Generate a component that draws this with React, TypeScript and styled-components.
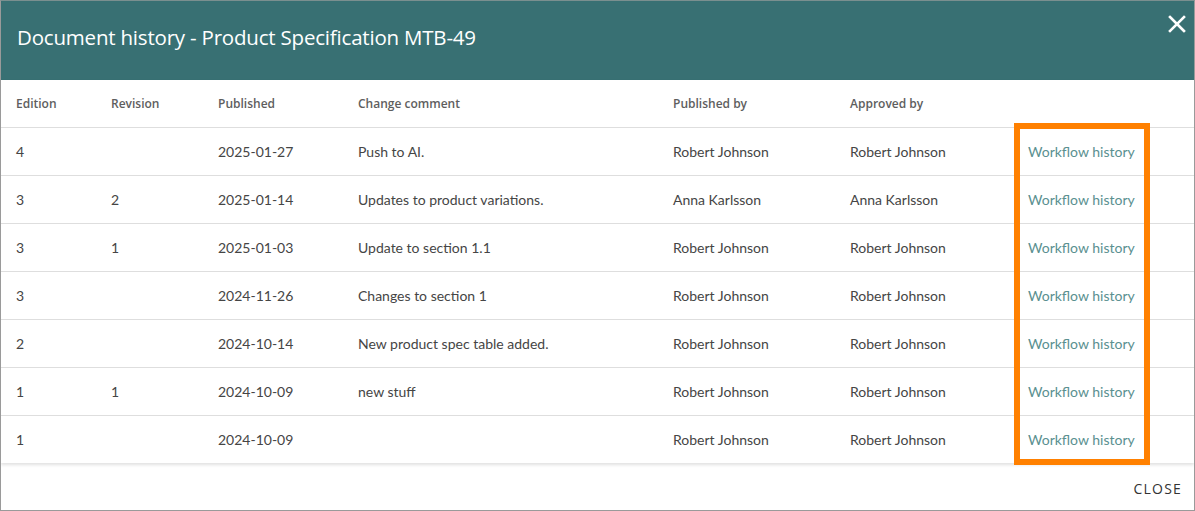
import React from "react";
import styled, { createGlobalStyle } from "styled-components";

const GlobalStyle = createGlobalStyle`
    html, body {
        margin: 0;
        padding: 0;
        background: #ffffff;
    }
`;

const Dialog = styled.div`
    position: relative;
    box-sizing: border-box;
    width: 1195px;
    height: 511px;
    border: 1px solid #9a9a9a;
    border-top-color: #7a8f8f;
    display: flex;
    flex-direction: column;
    overflow: hidden;
    font-family: "Open Sans", "Liberation Sans", sans-serif;
    background: #ffffff;
`;

const Header = styled.div`
    height: 79px;
    flex-shrink: 0;
    background-color: #387073;
    display: flex;
    align-items: center;
    justify-content: space-between;
    padding: 0 16px;
`;

const Title = styled.h1`
    margin: 0 0 8px;
    font-family: "Open Sans", sans-serif;
    font-size: 20.5px;
    font-weight: 400;
    letter-spacing: -0.2px;
    color: #ffffff;
`;

const CloseIcon = styled.button`
    align-self: flex-start;
    margin: 13px -9px 0 0;
    padding: 0;
    border: none;
    background: none;
    cursor: pointer;
    width: 20px;
    height: 20px;
`;

const Body = styled.div`
    flex: 1;
    overflow: hidden;
    box-shadow: 0 2px 3px rgba(0, 0, 0, 0.12);
    position: relative;
    z-index: 1;
`;

const Table = styled.table`
    width: 100%;
    border-collapse: collapse;
    table-layout: fixed;
`;

const Th = styled.th<{ $w?: number }>`
    box-sizing: border-box;
    width: ${(p) => (p.$w ? `${p.$w}px` : "auto")};
    height: 47px;
    padding: 0 0 0 15px;
    text-align: left;
    font-family: "Open Sans", sans-serif;
    font-size: 12px;
    font-weight: 600;
    color: #5e5e5e;
    border-bottom: 1px solid #dedede;
`;

const Td = styled.td<{ $link?: boolean }>`
    height: 47px;
    padding: 0 0 0 15px;
    font-family: "Lato", sans-serif;
    font-size: 14px;
    font-weight: 400;
    color: ${(p) => (p.$link ? "#5a9090" : "#454545")};
    border-bottom: 1px solid #dedede;
    white-space: nowrap;
    overflow: hidden;
    cursor: ${(p) => (p.$link ? "pointer" : "default")};
`;

const LastRow = styled.tr`
    & > td {
        border-bottom: none;
        height: 48px;
    }
`;

const Footer = styled.div`
    height: 47px;
    flex-shrink: 0;
    display: flex;
    align-items: center;
    justify-content: flex-end;
    padding: 0 12px;
`;

const CloseButton = styled.button`
    border: none;
    background: none;
    padding: 0;
    margin-top: 4px;
    font-family: "Open Sans", sans-serif;
    font-size: 14px;
    letter-spacing: 1.2px;
    color: #333333;
    cursor: pointer;
`;

const Highlight = styled.div`
    position: absolute;
    left: 1013px;
    top: 122px;
    width: 124px;
    height: 330px;
    border: 6px solid #ff8000;
    z-index: 2;
    pointer-events: none;
`;

interface IRow {
    edition: string;
    revision: string;
    published: string;
    comment: string;
    publishedBy: string;
    approvedBy: string;
}

const rows: IRow[] = [
    { edition: "4", revision: "", published: "2025-01-27", comment: "Push to AI.", publishedBy: "Robert Johnson", approvedBy: "Robert Johnson" },
    { edition: "3", revision: "2", published: "2025-01-14", comment: "Updates to product variations.", publishedBy: "Anna Karlsson", approvedBy: "Anna Karlsson" },
    { edition: "3", revision: "1", published: "2025-01-03", comment: "Update to section 1.1", publishedBy: "Robert Johnson", approvedBy: "Robert Johnson" },
    { edition: "3", revision: "", published: "2024-11-26", comment: "Changes to section 1", publishedBy: "Robert Johnson", approvedBy: "Robert Johnson" },
    { edition: "2", revision: "", published: "2024-10-14", comment: "New product spec table added.", publishedBy: "Robert Johnson", approvedBy: "Robert Johnson" },
    { edition: "1", revision: "1", published: "2024-10-09", comment: "new stuff", publishedBy: "Robert Johnson", approvedBy: "Robert Johnson" },
    { edition: "1", revision: "", published: "2024-10-09", comment: "", publishedBy: "Robert Johnson", approvedBy: "Robert Johnson" },
];

const Cells = ({ row }: { row: IRow }) => (
    <>
        <Td>{row.edition}</Td>
        <Td>{row.revision}</Td>
        <Td>{row.published}</Td>
        <Td>{row.comment}</Td>
        <Td>{row.publishedBy}</Td>
        <Td>{row.approvedBy}</Td>
        <Td $link>Workflow history</Td>
    </>
);

const App = () => {
    return (
        <>
            <GlobalStyle />
            <Dialog>
                <Header>
                    <Title>Document history - Product Specification MTB-49</Title>
                    <CloseIcon aria-label="close">
                        <svg width="20" height="20" viewBox="0 0 20 20">
                            <path
                                d="M3 3 L17 17 M17 3 L3 17"
                                stroke="#ffffff"
                                strokeWidth="2.6"
                                strokeLinecap="square"
                            />
                        </svg>
                    </CloseIcon>
                </Header>
                <Body>
                    <Table>
                        <thead>
                            <tr>
                                <Th $w={95}>Edition</Th>
                                <Th $w={107}>Revision</Th>
                                <Th $w={140}>Published</Th>
                                <Th $w={315}>Change comment</Th>
                                <Th $w={177}>Published by</Th>
                                <Th $w={178}>Approved by</Th>
                                <Th></Th>
                            </tr>
                        </thead>
                        <tbody>
                            {rows.map((row, i) =>
                                i === rows.length - 1 ? (
                                    <LastRow key={i}>
                                        <Cells row={row} />
                                    </LastRow>
                                ) : (
                                    <tr key={i}>
                                        <Cells row={row} />
                                    </tr>
                                )
                            )}
                        </tbody>
                    </Table>
                </Body>
                <Footer>
                    <CloseButton>CLOSE</CloseButton>
                </Footer>
                <Highlight />
            </Dialog>
        </>
    );
};

export default App;
